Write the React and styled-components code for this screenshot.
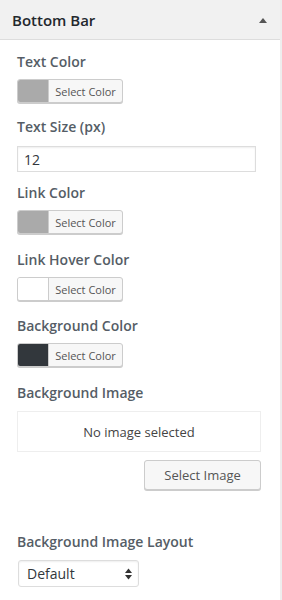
import React from 'react';
import styled, { createGlobalStyle } from 'styled-components';

const GlobalStyle = createGlobalStyle`
  html, body {
    margin: 0;
    padding: 0;
    background: #fff;
    font-family: "Open Sans", "Noto Sans", sans-serif;
  }
`;

const Panel = styled.div`
  width: 280px;
  min-height: 600px;
  border-right: 2px solid #eee;
  background: #fff;
`;

const SectionHeader = styled.div`
  height: 39px;
  background: #f1f1f1;
  border-bottom: 1px solid #ddd;
  display: flex;
  align-items: center;
  justify-content: space-between;
  padding: 0 13px 0 12px;
  font-size: 15px;
  font-weight: 600;
  color: #23282d;
`;

const Body = styled.div`
  padding: 12px 17px 0 17px;
`;

const Control = styled.div`
  margin-bottom: ${p => p.gap}px;
`;

const Label = styled.div`
  font-size: 14px;
  font-weight: 600;
  line-height: 20px;
  color: #555d66;
  margin-bottom: ${p => p.gap || 7}px;
`;

const ColorButton = styled.button`
  display: flex;
  align-items: stretch;
  height: 24px;
  width: 106px;
  padding: 0;
  border: 1px solid #ccc;
  border-radius: 3px;
  background: #f7f7f7;
  box-shadow: 0 1px 0 #ccc;
  overflow: hidden;
  font-family: inherit;
  cursor: pointer;
`;

const Swatch = styled.span`
  width: 30px;
  background: ${p => p.color};
  border-right: 1px solid #ccc;
`;

const ColorText = styled.span`
  flex: 1;
  display: flex;
  align-items: center;
  justify-content: center;
  font-size: 11px;
  color: #555;
`;

const TextInput = styled.input`
  box-sizing: border-box;
  width: 239px;
  height: 26px;
  border: 1px solid #ddd;
  box-shadow: inset 0 1px 2px rgba(0, 0, 0, 0.07);
  padding: 0 6px;
  font-family: inherit;
  font-size: 14px;
  color: #32373c;
  outline: none;
`;

const Placeholder = styled.div`
  box-sizing: border-box;
  width: 244px;
  height: 41px;
  border: 1px solid #eee;
  display: flex;
  align-items: center;
  justify-content: center;
  font-size: 13px;
  color: #444;
`;

const Actions = styled.div`
  width: 244px;
  display: flex;
  justify-content: flex-end;
  margin-top: 8px;
`;

const Button = styled.button`
  box-sizing: border-box;
  height: 30px;
  width: 117px;
  border: 1px solid #ccc;
  border-radius: 3px;
  background: #f7f7f7;
  box-shadow: 0 1px 0 #ccc;
  font-family: inherit;
  font-size: 13px;
  color: #555;
  cursor: pointer;
`;

const Select = styled.div`
  box-sizing: border-box;
  margin-left: 1px;
  width: 121px;
  height: 27px;
  border: 1px solid #ddd;
  border-radius: 3px;
  box-shadow: inset 0 1px 2px rgba(0, 0, 0, 0.07);
  display: flex;
  align-items: center;
  justify-content: space-between;
  padding: 0 6px 0 8px;
  font-size: 14px;
  color: #32373c;
`;

const Arrow = () => (
  <svg width="8" height="6" viewBox="0 0 8 6">
    <path d="M0 6 L4 1 L8 6 Z" fill="#555" />
  </svg>
);

const UpDown = () => (
  <svg width="7" height="12" viewBox="0 0 7 12">
    <path d="M0 5 L3.5 0.5 L7 5 Z" fill="#333" />
    <path d="M0 7 L3.5 11.5 L7 7 Z" fill="#333" />
  </svg>
);

const ColorControl = ({ label, color, gap }) => (
  <Control gap={gap}>
    <Label>{label}</Label>
    <ColorButton>
      <Swatch color={color} />
      <ColorText>Select Color</ColorText>
    </ColorButton>
  </Control>
);

export default function App() {
  return (
    <>
      <GlobalStyle />
      <Panel>
        <SectionHeader>
          <span>Bottom Bar</span>
          <Arrow />
        </SectionHeader>
        <Body>
          <ColorControl label="Text Color" color="#aaaaaa" gap={14} />
          <Control gap={11}>
            <Label gap={9}>Text Size (px)</Label>
            <TextInput defaultValue="12" />
          </Control>
          <ColorControl label="Link Color" color="#aaaaaa" gap={16} />
          <ColorControl label="Link Hover Color" color="#ffffff" gap={15} />
          <ColorControl label="Background Color" color="#32373c" gap={16} />
          <Control gap={42}>
            <Label gap={8}>Background Image</Label>
            <Placeholder>No image selected</Placeholder>
            <Actions>
              <Button>Select Image</Button>
            </Actions>
          </Control>
          <Control gap={0}>
            <Label gap={8}>Background Image Layout</Label>
            <Select>
              <span>Default</span>
              <UpDown />
            </Select>
          </Control>
        </Body>
      </Panel>
    </>
  );
}
